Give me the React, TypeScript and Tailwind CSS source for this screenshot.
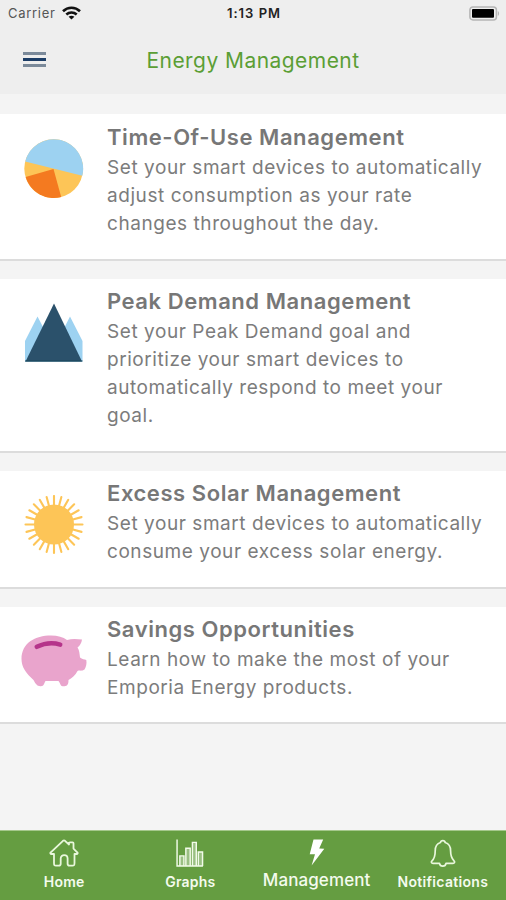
import React from 'react';

const PieIcon: React.FC = () => (
  <svg width="60" height="60" viewBox="0 0 60 60">
    <circle cx="29.7" cy="29.7" r="29.4" fill="#fdc557" />
    <path d="M1.2 22.5A29.4 29.4 0 0 1 58.3 36.7Z" fill="#9dd2f1" />
    <path d="M29.5 30L1.6 38A29.4 29.4 0 0 0 37.2 58.1Z" fill="#f47a20" />
  </svg>
);

const PeakIcon: React.FC = () => (
  <svg width="60" height="60" viewBox="0 0 60 60">
    <path d="M1 58.5V38L13.5 13.5L30 45L46 13.5L58.5 38V58.5Z" fill="#9dd2f1" />
    <path d="M1.5 58.5L30 0.5L58 58.5Z" fill="#2b516b" />
    <path d="M1 58H58.5" stroke="#17465a" strokeWidth="1" />
  </svg>
);

const SunIcon: React.FC = () => (
  <svg width="60" height="60" viewBox="0 0 60 60">
    <circle cx="30" cy="29.5" r="20" fill="#fdc557" />
    {Array.from({ length: 24 }, (_, i) => (
      <path
        key={i}
        d="M30 10V1"
        stroke="#fdc557"
        strokeWidth="2.1"
        strokeLinecap="round"
        transform={`rotate(${i * 15} 30 29.5)`}
      />
    ))}
  </svg>
);

const PigIcon: React.FC = () => (
  <svg width="66" height="52" viewBox="0 0 66 52">
    <path
      d="M0.5 24C0.5 8 14 0.5 30 0.5C37 0.5 42 2 46 5C51 3.5 56 4 61 4.5C60.5 8 59 10.5 56.5 12.5C58.5 15.5 58.5 18.5 59 22.5C61 24.5 63.5 24 65.3 25C66 29 65 32 63.5 34.5C61 36.5 58.5 35 56.5 36C54.5 40.5 50.5 43 47.500 45C47.5 49 46.5 51.2 43.5 51.2H41.5C39.5 51.2 39.5 48.5 37.5 46H24.5C23 48.5 23 51.2 20 51.2C16 51.5 14.5 48.5 12.5 45C5.5 38.5 0.5 32.5 0.5 24Z"
      fill="#e9a4cc"
    />
    <path d="M15.8 11.8C23 8.3 32 7.4 39.2 9.6" fill="none" stroke="#b5348a" strokeWidth="4.6" strokeLinecap="round" />
  </svg>
);

const HomeIcon: React.FC = () => (
  <svg width="30" height="28" viewBox="0 0 30 28" fill="none" stroke="#e9f7dc" strokeWidth="1.8" strokeLinejoin="round" strokeLinecap="round">
    <path d="M5 15H2.5C1.3 15 1 14 1.8 13.3L14 1.8C14.7 1.2 15.3 1.2 16 1.8L20 5.5V4.3C20 3.7 20.3 3.4 20.9 3.4H23.6C24.2 3.4 24.5 3.7 24.5 4.3V9.6L28.2 13.3C29 14 28.7 15 27.5 15H25.5V24C25.500 26.3 25 26.7 23.500 26.7H20.500C19 26.7 18.6 26.3 18.6 24.8V19.5C18.6 15 11.7 15 11.7 19.5V24.8C11.7 26.3 11.3 26.7 9.800 26.7H7C5.5 26.7 5 26.3 5 24Z" />
  </svg>
);

const GraphIcon: React.FC = () => (
  <svg width="30" height="28" viewBox="0 0 30 29" fill="none" stroke="#f2fbe9" strokeWidth="1.5">
    <path d="M1.6 0.5V28H28.4" />
    <path
      d="M4.5 28V17.5H8.7V28M10.7 28V9.5H15.2V28M17.5 28V3.5H21.5V28M23.6 28V13.5H28V28"
      fill="#fff"
      fillOpacity="0.35"
    />
  </svg>
);

const BoltIcon: React.FC = () => (
  <svg width="16" height="27" viewBox="0 0 16 27" fill="#fff">
    <path d="M4.5 0.5H14.2L10.2 9.5L15.3 9.8L2.6 26.5L6 15.2H0.7Z" />
  </svg>
);

const BellIcon: React.FC = () => (
  <svg width="26" height="28" viewBox="0 0 26 28" fill="none" stroke="#e9f7dc" strokeWidth="1.7" strokeLinejoin="round">
    <path d="M10.5 3.5C10.8 1 14.8 1 15.2 3.5C19 4.5 20.6 8 20.6 12C20.6 17 22.2 20 24 21.8C25.2 23 24.5 24.3 23 24.3H16C15.5 28 10 28 9.5 24.3H3C1.3 24.3 0.8 23 2 21.8C4 20 5.2 17 5.2 12C5.2 8 6.8 4.5 10.5 3.5Z" />
  </svg>
);

interface CardProps {
  title: string;
  lines: string[];
  icon: React.ReactNode;
  className: string;
}

const Card: React.FC<CardProps> = ({ title, lines, icon, className }) => (
  <section className={`flex shrink-0 border-b-2 border-[#dcdcdc] bg-white ${className}`}>
    <div className="flex w-[107px] shrink-0 items-start justify-center pt-4">{icon}</div>
    <div className="whitespace-nowrap">
      <h2 className="text-[22px] leading-7 font-semibold tracking-[0.56px] text-[#777777]">{title}</h2>
      <p className="mt-[3px] text-[19px] leading-7 tracking-[0.56px] text-[#7c7c7c]">
        {lines.map((line) => (
          <span key={line} className="block">{line}</span>
        ))}
      </p>
    </div>
  </section>
);

const App: React.FC = () => {
  return (
    <div className="flex h-[900px] w-[506px] flex-col overflow-hidden bg-[#f4f4f4] font-['Inter',sans-serif]">
      <header className="h-[94px] shrink-0 bg-[#eeeeee]">
        <div className="grid h-[26px] grid-cols-3 items-center pr-1.5 pl-2 text-[13px] text-[#222]">
          <div className="flex items-center gap-1.5">
            <span className="pt-px tracking-[0.7px] text-[#555]">Carrier</span>
            <svg width="19" height="14" viewBox="0 0 19 14" fill="none" stroke="#111" strokeWidth="2.6">
              <path d="M1 5.2C5.8 0.6 13.2 0.6 18 5.2" />
              <path d="M4.3 8.5C7.3 5.8 11.7 5.8 14.7 8.5" />
              <path d="M9.5 13.5L6.6 10.7C8.3 9.3 10.7 9.3 12.4 10.7Z" fill="#111" stroke="none" />
            </svg>
          </div>
          <span className="pt-px text-center font-semibold tracking-[1px]">1:13 PM</span>
          <svg className="justify-self-end" width="31" height="15" viewBox="0 0 31 15">
            <rect x="0.9" y="0.9" width="26.5" height="13" rx="3" fill="#eee" stroke="#b5b5b5" strokeWidth="1.5" />
            <rect x="3" y="3" width="22" height="8.8" rx="1" fill="#000" />
            <path d="M28.8 5V10C30.5 9.3 30.5 5.7 28.8 5Z" fill="#b5b5b5" />
          </svg>
        </div>
        <div className="grid h-[67px] grid-cols-[1fr_auto_1fr] items-center px-[23px]">
          <div className="flex w-[23px] flex-col gap-[3px]">
            <span className="h-[3px] bg-[#7b8a9a]" />
            <span className="h-[3px] bg-[#1c3d66]" />
            <span className="h-[3px] bg-[#7b8a9a]" />
          </div>
          <h1 className="pt-0.5 text-[21px] tracking-[0.45px] text-[#5b9e35]">Energy Management</h1>
        </div>
      </header>

      <main className="flex flex-1 flex-col gap-[18px] pt-5">
        <Card
          title="Time-Of-Use Management"
          lines={['Set your smart devices to automatically', 'adjust consumption as your rate', 'changes throughout the day.']}
          icon={<PieIcon />}
          className="h-[147px] pt-[9px]"
        />
        <Card
          title="Peak Demand Management"
          lines={['Set your Peak Demand goal and', 'prioritize your smart devices to', 'automatically respond to meet your', 'goal.']}
          icon={<PeakIcon />}
          className="h-[174px] pt-2"
        />
        <Card
          title="Excess Solar Management"
          lines={['Set your smart devices to automatically', 'consume your excess solar energy.']}
          icon={<SunIcon />}
          className="h-[118px] pt-2"
        />
        <Card
          title="Savings Opportunities"
          lines={['Learn how to make the most of your', 'Emporia Energy products.']}
          icon={<div className="pt-1"><PigIcon /></div>}
          className="h-[117px] pt-2"
        />
      </main>

      <nav className="grid h-[70px] shrink-0 grid-cols-4 border-t border-[#a5c88c] bg-[#659d41] pl-px text-[14px] font-semibold text-[#f4fbee]">
        <div className="flex flex-col items-center gap-1 pt-2">
          <HomeIcon />
          <span className="tracking-[0.2px]">Home</span>
        </div>
        <div className="flex flex-col items-center gap-1 pt-2">
          <GraphIcon />
          <span className="tracking-[0.2px]">Graphs</span>
        </div>
        <div className="flex flex-col items-center gap-0.5 pt-2">
          <BoltIcon />
          <span className="text-[17px] leading-6 font-medium tracking-[0.1px]">Management</span>
        </div>
        <div className="flex flex-col items-center gap-1 pt-2">
          <BellIcon />
          <span className="tracking-[0.3px]">Notifications</span>
        </div>
      </nav>
    </div>
  );
};

export default App;
